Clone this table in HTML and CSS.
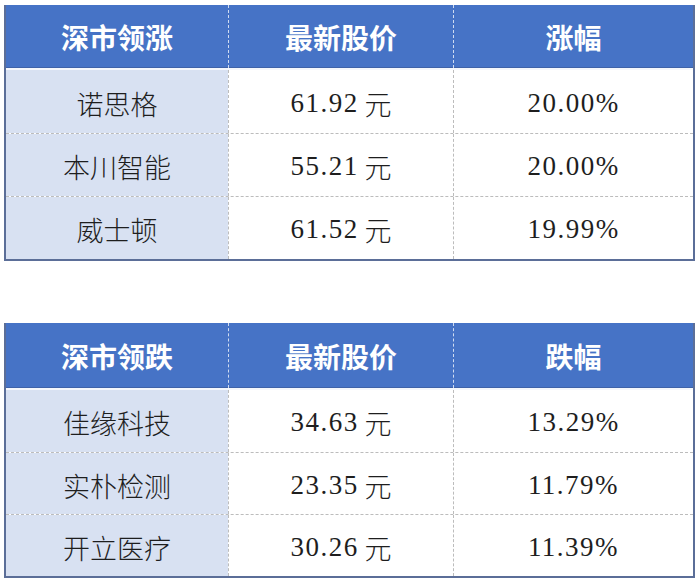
FILE: index.html
```html
<!DOCTYPE html>
<html lang="zh-CN">
<head>
<meta charset="utf-8">
<link rel="stylesheet" href="styles.css">
</head>
<body>
<div class="page">
  <div class="tbl tbl-up">
    <div class="row head">
      <div class="cell">深市领涨</div>
      <div class="cell">最新股价</div>
      <div class="cell">涨幅</div>
    </div>
    <div class="row">
      <div class="cell name">诺思格</div>
      <div class="cell"><span class="num">61.92</span> 元</div>
      <div class="cell"><span class="num">20.00%</span></div>
    </div>
    <div class="row">
      <div class="cell name">本川智能</div>
      <div class="cell"><span class="num">55.21</span> 元</div>
      <div class="cell"><span class="num">20.00%</span></div>
    </div>
    <div class="row">
      <div class="cell name">威士顿</div>
      <div class="cell"><span class="num">61.52</span> 元</div>
      <div class="cell"><span class="num">19.99%</span></div>
    </div>
  </div>

  <div class="tbl tbl-down">
    <div class="row head">
      <div class="cell">深市领跌</div>
      <div class="cell">最新股价</div>
      <div class="cell">跌幅</div>
    </div>
    <div class="row">
      <div class="cell name">佳缘科技</div>
      <div class="cell"><span class="num">34.63</span> 元</div>
      <div class="cell"><span class="num">13.29%</span></div>
    </div>
    <div class="row">
      <div class="cell name">实朴检测</div>
      <div class="cell"><span class="num">23.35</span> 元</div>
      <div class="cell"><span class="num">11.79%</span></div>
    </div>
    <div class="row">
      <div class="cell name">开立医疗</div>
      <div class="cell"><span class="num">30.26</span> 元</div>
      <div class="cell"><span class="num">11.39%</span></div>
    </div>
  </div>
</div>
</body>
</html>
```

FILE: styles.css
```css
* { box-sizing: border-box; }
html, body { margin: 0; padding: 0; background: #ffffff; }
body {
  font-family: "Noto Sans CJK SC", "Noto Sans", sans-serif;
  color: #1e1e1e;
}
.page {
  padding: 5px 2px 0 4px;
  display: flex;
  flex-direction: column;
  gap: 62px;
}
.tbl {
  width: 691px;
  border: 2px solid #5b6e98;
  border-top: none;
  background: #ffffff;
}
.row {
  display: grid;
  grid-template-columns: 222px 225px 1fr;
  height: 63px;
}
.row + .row { border-top: 1px dashed #bcbcbc; }
.row.head {
  height: 65px;
  background: #4673c6;
  color: #ffffff;
  border-bottom: 2px solid #f4f7fc;
  box-shadow: inset 0 -1px 0 #3e62a8;
}
.row.head + .row { border-top: none; }
.cell {
  display: flex;
  align-items: center;
  justify-content: center;
  font-size: 27px;
  font-weight: 300;
  white-space: pre;
  padding-top: 3px;
}
.cell + .cell { border-left: 1px dashed #bcbcbc; }
.head .cell {
  font-weight: 700;
  font-size: 28px;
  padding-top: 0;
}
.head .cell + .cell { border-left: 1px dashed rgba(255,255,255,0.75); }
.name { background: #d8e1f2; }
.num {
  font-family: "Liberation Serif", "Times New Roman", serif;
  font-size: 27px;
  letter-spacing: 1.5px;
}
.tbl-down .row { height: 62px; }
.tbl-down .row.head { height: 67px; }
```
